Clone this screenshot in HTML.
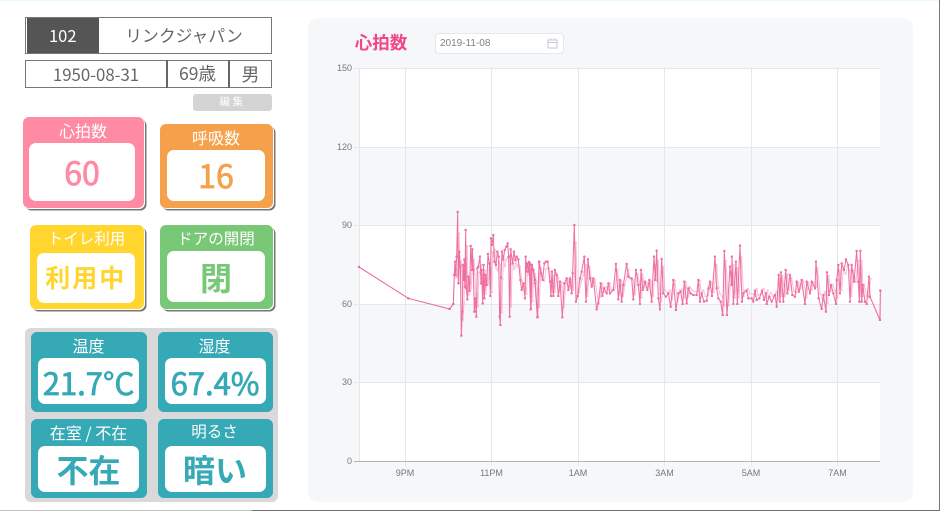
<!DOCTYPE html>
<html lang="ja"><head><meta charset="utf-8"><title>心拍数</title>
<style>
html,body{margin:0;padding:0;background:#fff}
body{width:940px;height:511px;position:relative;overflow:hidden;font-family:"Noto Sans CJK JP","Liberation Sans",sans-serif}
#w{position:absolute;left:0;top:0;width:940px;height:511px;filter:blur(.3px)}
.a{position:absolute;box-sizing:border-box}
.c{display:flex;align-items:center;justify-content:center;white-space:nowrap;line-height:1}
.card{border-radius:6px}
.sh{box-shadow:1px 1px 0 #fff,2.5px 2.5px 0 #777}
.in{background:#fff;border-radius:7px}
.t{color:#fff;font-size:16px}
.teal{background:#35a9b5;border-radius:6px}
.tv{color:#35a9b5}
.s{-webkit-text-stroke:.8px currentColor}
#d1 polyline{marker-start:url(#m);marker-mid:url(#m);marker-end:url(#m)}
</style></head><body><div id="w">
<div class="a" style="left:0;top:0;width:940px;height:1px;background:#e6fcfc"></div>
<div class="a" style="left:0;top:510px;width:252px;height:1px;background:#c4c4c4"></div>
<div class="a" style="left:252px;top:510px;width:688px;height:1px;background:#6e6e6e"></div>
<div class="a" style="left:939px;top:0;width:1px;height:511px;background:#777"></div>

<div class="a" style="left:25px;top:17px;width:247px;height:37px;border:1.5px solid #777"></div>
<div class="a c" style="left:26.500px;top:18px;width:72.5px;height:35px;background:#555;color:#fff;font-size:16.500px">102</div>
<div class="a c" style="left:97px;top:18px;width:174px;height:35px;color:#666;font-size:16.8px">リンクジャパン</div>

<div class="a" style="left:25px;top:60px;width:247px;height:28px;border:1.5px solid #777"></div>
<div class="a" style="left:166px;top:60px;width:1.5px;height:28px;background:#666"></div>
<div class="a" style="left:228px;top:60px;width:1.5px;height:28px;background:#666"></div>
<div class="a c" style="left:26px;top:60px;width:140px;height:28px;color:#666;font-size:16.8px">1950-08-31</div>
<div class="a c" style="left:167px;top:60px;width:61px;height:28px;color:#666;font-size:17.5px">69歳</div>
<div class="a c" style="left:229px;top:60px;width:43px;height:28px;color:#666;font-size:18px">男</div>
<div class="a c" style="left:193px;top:94px;width:79px;height:17px;background:#d4d4d4;border-radius:3px;color:#fff;font-size:10.5px;letter-spacing:2.5px">編集</div>

<div class="a card sh" style="left:22.5px;top:116.5px;width:121.5px;height:91.5px;background:#ff8aa3"></div>
<div class="a c t" style="left:22px;top:121px;width:122px;height:18px">心拍数</div>
<div class="a in c s" style="left:29px;top:143px;width:106px;height:57.5px;color:#ff8aa3;font-size:32px">60</div>

<div class="a card sh" style="left:159.5px;top:124px;width:113.5px;height:84px;background:#f5a04a"></div>
<div class="a c t" style="left:159px;top:128px;width:114px;height:18px">呼吸数</div>
<div class="a in c s" style="left:167px;top:150px;width:98px;height:50.5px;color:#f5a04a;font-size:32px">16</div>

<div class="a card sh" style="left:29.5px;top:225px;width:114.5px;height:84px;background:#ffd52e"></div>
<div class="a c t" style="left:29px;top:230px;width:115px;height:18px;font-size:15.5px">トイレ利用</div>
<div class="a in c" style="left:37px;top:252.5px;width:97.5px;height:50.5px;color:#ffd52e;font-size:25px;font-weight:700;letter-spacing:2px">利用中</div>

<div class="a card sh" style="left:159.5px;top:225px;width:113.5px;height:84px;background:#78c878"></div>
<div class="a c t" style="left:159px;top:230px;width:114px;height:18px;font-size:15.5px">ドアの開閉</div>
<div class="a in c" style="left:167px;top:251px;width:98px;height:50.5px;color:#78c878;font-size:32px;font-weight:700"><span style="position:relative;top:1px">閉</span></div>

<div class="a" style="left:25px;top:328px;width:253px;height:174px;background:#d9d9d9;border-radius:6px"></div>
<div class="a teal" style="left:31px;top:332px;width:115.5px;height:79.5px"></div>
<div class="a c t" style="left:31px;top:336px;width:115px;height:18px">温度</div>
<div class="a in c tv s" style="left:38px;top:358px;width:101px;height:46px;font-size:31px">21.7°C</div>
<div class="a teal" style="left:157.5px;top:332px;width:115px;height:79.5px"></div>
<div class="a c t" style="left:157px;top:336px;width:115px;height:18px">湿度</div>
<div class="a in c tv s" style="left:164.5px;top:358px;width:101px;height:46px;font-size:31px">67.4%</div>
<div class="a teal" style="left:31px;top:419px;width:115.5px;height:79px"></div>
<div class="a c t" style="left:31px;top:423px;width:115px;height:18px;font-size:16px">在室 / 不在</div>
<div class="a in c tv" style="left:38px;top:445.5px;width:101px;height:46.5px;font-size:32px;font-weight:700">不在</div>
<div class="a teal" style="left:157.5px;top:419px;width:115px;height:79px"></div>
<div class="a c t" style="left:157px;top:423px;width:115px;height:18px;font-size:15.5px">明るさ</div>
<div class="a in c tv" style="left:164.5px;top:445.5px;width:101px;height:46.5px;font-size:32px;font-weight:700">暗い</div>

<div class="a" style="left:308px;top:18px;width:605px;height:484px;background:#f6f7f9;border-radius:10px"></div>
<div class="a c" style="left:355px;top:33px;width:52px;height:20px;color:#f0468a;font-size:17.5px;font-weight:700">心拍数</div>
<div class="a" style="left:434.5px;top:33px;width:129px;height:21px;background:#fff;border:1px solid #e4e7ed;border-radius:4px"></div>
<div class="a" style="left:440px;top:37px;height:14px;line-height:14px;color:#808080;font-size:10px;font-family:'Liberation Sans',sans-serif">2019-11-08</div>
<svg class="a" style="left:547px;top:38px" width="11" height="11" viewBox="0 0 11 11" fill="none" stroke="#c4c7cc" stroke-width="1"><rect x="1" y="2" width="9" height="8"/><path d="M1 4.5H10M3.5 .5V2.5M7.5 .5V2.5"/></svg>

<svg class="a" style="left:0;top:0" width="940" height="511" viewBox="0 0 940 511">
<defs><marker id="m" viewBox="0 0 4 4" refX="2" refY="2" markerUnits="userSpaceOnUse" markerWidth="7.5" markerHeight="7.5"><circle cx="2" cy="2" r="2" fill="#ee6a9c"/></marker>
<g id="d1"><g transform="translate(340 200) scale(.33333)">
<polyline points="343,225 345,185 347,225 350,170 353,36 355,250 358,155 361,200 364,407 367,335 369,195 371,240 373,178 375,260 377,90 379,265 382,298 385,230 389,272 392,138 396,210 397,148 400,210 403,335 406,295 409,350 412,205 415,200 420,170 423,250 425,210 428,310 431,195 433,295 436,225 440,255 444,162 448,190 451,288 453,115 456,135 460,105 463,185 468,195 472,155 476,170 479,350 481,375 483,232 486,155 490,178 494,150 499,140 503,130 506,170 509,350 512,148 518,190 522,155 526,180 530,170 535,178 541,240 545,270 550,250 555,295 557,170 560,215 563,190 567,215 570,190 573,327 576,195 580,210 585,240 593,350 597,185"/>
</g>
<g transform="translate(530 210) scale(.33333)">
<polyline points="-3,156 2,298 5,165 10,180 15,220 22,322 28,155 33,190 38,210 43,160 48,155 53,155 60,215 63,258 66,185 70,258 75,180 80,195 85,258 90,215 97,322 103,220 110,205 115,240 120,205 125,250 128,190 133,45 138,275 143,258 150,205 155,185 163,140 168,275 174,148 180,205 185,230 190,205 200,298 205,280 212,220 217,258 222,235 230,250 235,220 240,250 250,240 258,162 265,268 270,210 275,275 280,225 290,162 295,200 305,205 310,268 318,180 325,225 330,282 333,180 338,240 345,215 352,240 358,210 365,275 372,140 376,210 380,122 385,265 390,298 395,147 400,250 408,260 415,250 422,290 430,210 438,300 445,250 452,245 458,282 463,215 470,280 475,235 482,250 490,255 500,255 505,210 510,275 515,250 522,275 530,272 535,235 540,215 546,258 555,140 560,235 565,265 572,275 578,315"/>
</g>
<g transform="translate(720 230) scale(.33333)">
<polyline points="8,255 13,63 21,255 30,110 35,165 36,80 40,222 48,95 52,222 60,47 66,215 70,190 80,182 85,205 95,205 100,215 105,182 110,210 118,205 126,182 132,210 138,190 140,222 148,200 155,215 165,195 170,230 176,135 180,215 183,127 190,215 197,120 202,190 210,135 217,195 225,200 230,155 237,185 245,150 255,222 260,155 270,190 275,155 285,175 288,95 296,205 305,237 310,195 318,245 321,127 327,195 333,165 340,190 348,222 350,150 355,105 360,190 365,100 372,120 378,88 385,105 390,215 395,105 402,155 410,63 415,155 418,215 421,63 425,215 428,165 435,215 440,222 447,140"/>
</g></g>
</defs>
<rect x="359" y="68" width="521" height="79" fill="#fff"/>
<rect x="359" y="225" width="521" height="79" fill="#fff"/>
<rect x="359" y="382" width="521" height="79" fill="#fff"/>
<g stroke="#e6e7ea" stroke-width="1" fill="none">
<path d="M354 68.500H880M354 147.500H880M354 225.500H880M354 304.500H880M354 382.500H880"/>
<path d="M359.500 68V461M405.500 68V466M491.500 68V466M578.500 68V466M664.500 68V466M751.500 68V466M837.500 68V466"/>
</g>
<path d="M354 461.500H880" stroke="#b5b5b5" stroke-width="1"/>
<g font-family="Liberation Sans,sans-serif" font-size="9" fill="#777" text-anchor="end">
<text x="352" y="71">150</text><text x="352" y="150">120</text><text x="352" y="228">90</text><text x="352" y="307">60</text><text x="352" y="385">30</text><text x="352" y="464">0</text>
</g>
<g font-family="Liberation Sans,sans-serif" font-size="9" fill="#777" text-anchor="middle">
<text x="405" y="476">9PM</text><text x="491.500" y="476">11PM</text><text x="578" y="476">1AM</text><text x="664.500" y="476">3AM</text><text x="751" y="476">5AM</text><text x="837.500" y="476">7AM</text>
</g>
<g fill="none" stroke="#ee6a9c" stroke-width="3.2" stroke-linejoin="round">
<g transform="translate(340 200) scale(.33333)"><polyline marker-start="url(#m)" marker-mid="url(#m)" marker-end="url(#m)" points="57,201 205,295 329,327 340,312 343,225"/></g>
<use href="#d1" opacity=".95"/>
<use href="#d1" opacity=".4" transform="translate(1.6 85) scale(1 .7)"/>
<g transform="translate(720 230) scale(.33333)"><polyline marker-mid="url(#m)" marker-end="url(#m)" points="447,140 450,200 480,270 481,182"/></g>
</g>
</svg>
</div></body></html>
